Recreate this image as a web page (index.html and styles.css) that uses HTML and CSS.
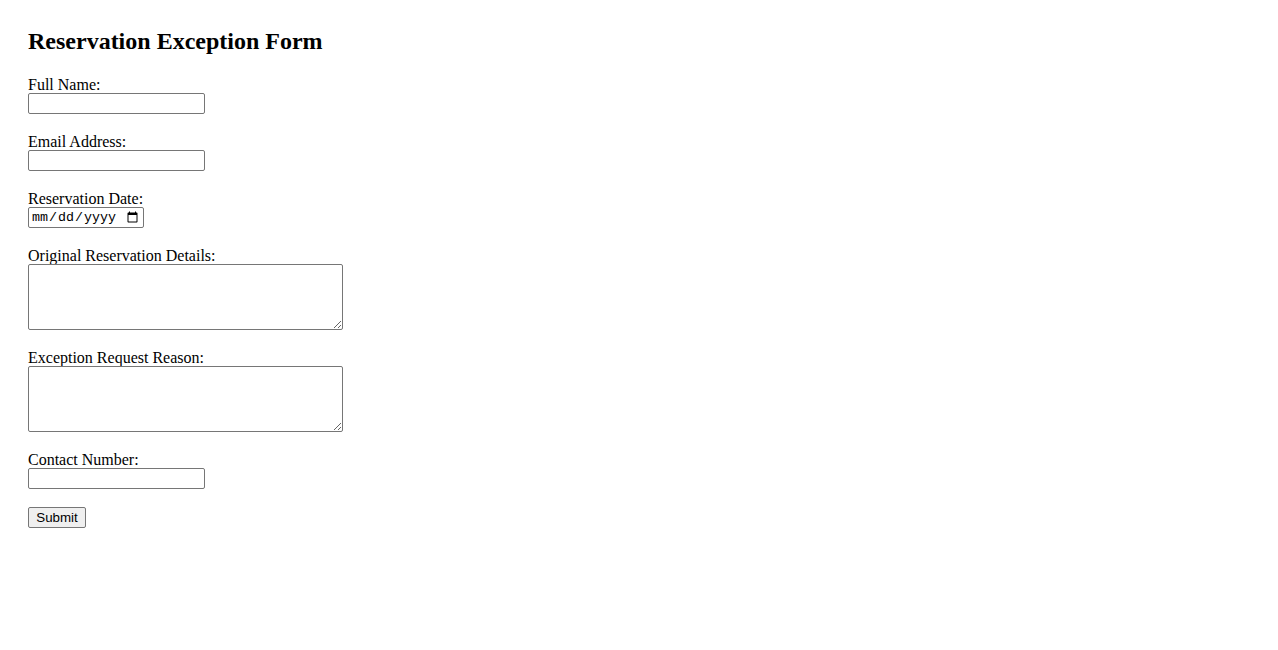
FILE: index.html
```html
<!DOCTYPE html>
<html lang="en">
<head>
<meta charset="utf-8">
<title>Reservation Exception Form</title>
<link rel="stylesheet" href="styles.css">
</head>
<body>
<div class="page">
  <h2 class="title">Reservation Exception Form</h2>
  <form class="form">
    <div class="field">
      <label class="label" for="name">Full Name:</label>
      <input class="text-input" type="text" id="name">
    </div>
    <div class="field">
      <label class="label" for="email">Email Address:</label>
      <input class="text-input" type="email" id="email">
    </div>
    <div class="field">
      <label class="label" for="date">Reservation Date:</label>
      <input class="date-input" type="date" id="date">
    </div>
    <div class="field">
      <label class="label" for="details">Original Reservation Details:</label>
      <textarea class="area" id="details"></textarea>
    </div>
    <div class="field">
      <label class="label" for="reason">Exception Request Reason:</label>
      <textarea class="area" id="reason"></textarea>
    </div>
    <div class="field">
      <label class="label" for="phone">Contact Number:</label>
      <input class="text-input" type="tel" id="phone">
    </div>
    <div class="field">
      <button class="submit" type="submit">Submit</button>
    </div>
  </form>
</div>
</body>
</html>
```
FILE: styles.css
```css
html, body {
  margin: 0;
  padding: 0;
  background: #fff;
}
.page {
  padding: 28px;
  font-family: "Liberation Serif", "Times New Roman", serif;
  font-size: 16px;
  color: #000;
}
.title {
  margin: 0 0 20px 0;
  font-size: 24px;
  font-weight: bold;
  line-height: 27px;
}
.form {
  display: flex;
  flex-direction: column;
  align-items: flex-start;
}
.field {
  display: flex;
  flex-direction: column;
  align-items: flex-start;
  margin-bottom: 18px;
}
.label {
  display: block;
  box-sizing: border-box;
  padding-top: 1px;
  line-height: 18px;
  height: 18px;
}
.text-input {
  box-sizing: border-box;
  width: 177px;
  height: 21px;
  margin: 0;
  padding: 1px 2px;
  border: 1px solid #767676;
  border-radius: 2px;
  font-family: "Liberation Sans", Arial, sans-serif;
  font-size: 13.33px;
}
.date-input {
  box-sizing: border-box;
  width: 116px;
  height: 21px;
  margin: 0;
  padding: 1px 2px;
  border: 1px solid #767676;
  border-radius: 2px;
  font-family: "Liberation Mono", "Courier New", monospace;
  font-size: 13.33px;
}
.area {
  box-sizing: border-box;
  width: 315px;
  height: 66px;
  margin: 0;
  padding: 2px;
  border: 1px solid #767676;
  border-radius: 2px;
  font-family: "Liberation Mono", monospace;
  font-size: 13.33px;
}
.submit {
  box-sizing: border-box;
  width: 58px;
  height: 21px;
  margin: 0;
  padding: 1px 6px;
  border: 1px solid #767676;
  border-radius: 2px;
  background: #efefef;
  font-family: "Liberation Sans", Arial, sans-serif;
  font-size: 13.33px;
  color: #000;
}
```
